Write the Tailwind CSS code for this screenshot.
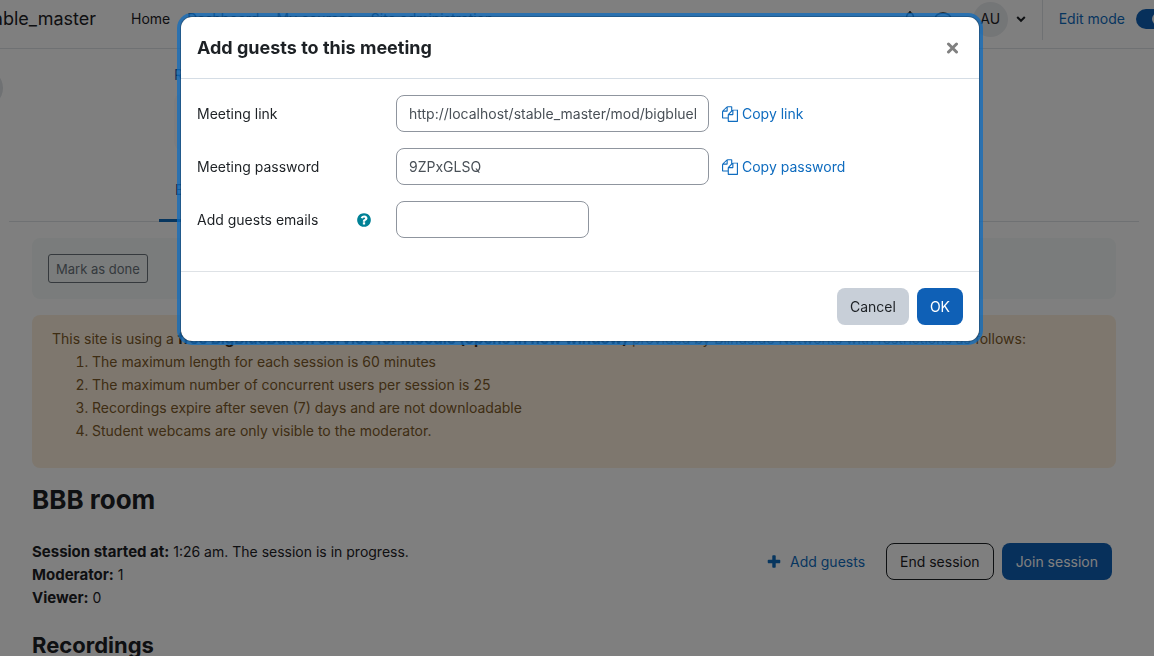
<!DOCTYPE html>
<html lang="en">
<head>
  <meta charset="UTF-8">
  <meta name="viewport" content="width=device-width, initial-scale=1.0">
  <title>BBB room</title>
  <script src="https://cdn.jsdelivr.net/npm/@tailwindcss/browser@4"></script>
</head>
<body class="overflow-hidden bg-white font-['Inter',sans-serif] text-[14px] leading-[22px] text-[#1d2125]">

  <!-- Navbar -->
  <header class="flex h-[49px] items-start justify-between overflow-hidden border-b border-[#dee2e6] whitespace-nowrap">
    <div class="flex h-[38px] items-center">
      <a href="#" class="flex w-24 justify-end overflow-hidden text-lg">stable_master</a>
      <nav class="ml-[35px] flex gap-[17px]">
        <a href="#">Home</a>
        <a href="#">Dashboard</a>
        <a href="#">My courses</a>
        <a href="#">Site administration</a>
      </nav>
    </div>
    <div class="flex h-[38px] items-center">
      <button type="button" aria-label="Notifications" class="mr-4">
        <svg class="size-4" viewBox="0 0 16 16" fill="none" stroke="currentColor" stroke-width="1.5"><path d="M8 0v2M3.500 12c1-1.500 1-3 1-5 0-3 1.500-5 3.500-5s3.500 2 3.500 5c0 2 0 3.500 1 5zM6.500 14h3"/></svg>
      </button>
      <button type="button" aria-label="Messages" class="mr-[21px]">
        <svg class="size-[18px]" viewBox="0 0 18 18" fill="none" stroke="currentColor" stroke-width="1.5"><path d="M9 3c4.500 0 8 2.500 8 6s-3.500 6-8 6c-1 0-2 0-3-.5L2.500 16l1-3C2 12 1 10.500 1 9c0-3.500 3.500-6 8-6z"/></svg>
      </button>
      <button type="button" class="flex items-center gap-2">
        <span class="flex size-[35px] items-center justify-center rounded-full bg-[#e9ecef]">AU</span>
        <svg class="h-2 w-[10px]" viewBox="0 0 10 8" fill="none" stroke="currentColor" stroke-width="2"><path d="M1.200 2L5 5.800 8.800 2"/></svg>
      </button>
      <label for="edit-mode" class="ml-4 flex h-[42px] items-center border-l border-[#dee2e6] pl-4 text-[#0f6cbf]">Edit mode</label>
      <span class="relative -mr-[18px] ml-[11px] flex">
        <input id="edit-mode" type="checkbox" checked class="h-5 w-9 appearance-none rounded-full bg-[#0f60b6]">
        <span class="pointer-events-none absolute top-1 left-4 size-3 rounded-full bg-white"></span>
      </span>
    </div>
  </header>

  <!-- Activity header and tabs -->
  <div class="relative mr-[15px] ml-[9px] border-b border-[#dee2e6]">
    <button type="button" aria-label="Open course index" class="absolute top-[20px] -left-[44px] size-[38px] rounded-full bg-[#dee2e6]"></button>
    <div class="px-[165px] pt-[15px]">
      <a href="#" class="text-[#0f6cbf]">Room</a>
      <div class="mt-2 size-[56px] rounded-lg bg-[#f8f9fa]"></div>
    </div>
    <div class="mt-6 flex px-[150px]">
      <a href="#" class="-mb-px border-b-3 border-[#0f6cbf] px-4 pt-[5px] pb-[18px] text-[#0b5190]">BigBlueButton</a>
    </div>
  </div>

  <main class="mr-[38px] ml-8">
    <div class="mt-4 rounded-lg bg-[#f5f9f8] p-4">
      <button type="button" class="h-[29px] rounded-[3px] border border-[#6a737b] px-[7px] text-[13px] leading-5 text-[#6a737b]">Mark as done</button>
    </div>

    <div class="mt-4 rounded-lg bg-[#fcefdc] px-5 pt-[13px] pb-[26px] text-[#7d5a29]">
      <p class="whitespace-nowrap">This site is using a <a href="#" class="text-[15px] font-bold text-[#3e2d14]">free BigBlueButton service for Moodle (opens in new window)</a> provided by Blindside Networks with restrictions as follows:</p>
      <ol class="list-decimal pl-10 leading-[23px]">
        <li>The maximum length for each session is 60 minutes</li>
        <li>The maximum number of concurrent users per session is 25</li>
        <li>Recordings expire after seven (7) days and are not downloadable</li>
        <li>Student webcams are only visible to the moderator.</li>
      </ol>
    </div>

    <h2 class="mt-4 text-[26px] leading-8 font-bold">BBB room</h2>

    <div class="mt-6 flex items-start justify-between">
      <div class="leading-[23px]">
        <p><strong class="text-[15px]">Session started at:</strong> 1:26 am. The session is in progress.</p>
        <p><strong class="text-[15px]">Moderator:</strong> 1</p>
        <p><strong class="text-[15px]">Viewer:</strong> 0</p>
      </div>
      <div class="mt-[3px] mr-1 flex items-center gap-2">
        <button type="button" class="flex h-[37px] items-center gap-2 px-[13px] text-[#0f6cbf]">
          <svg class="size-4" viewBox="0 0 1792 1792" fill="currentColor"><path d="M1600 736v192q0 40-28 68t-68 28h-416v416q0 40-28 68t-68 28H800q-40 0-68-28t-28-68v-416H288q-40 0-68-28t-28-68V736q0-40 28-68t68-28h416V224q0-40 28-68t68-28h192q40 0 68 28t28 68v416h416q40 0 68 28t28 68z"/></svg>
          Add guests
        </button>
        <button type="button" class="h-[37px] rounded-lg border border-[#1d2125] px-[13px]">End session</button>
        <button type="button" class="h-[37px] rounded-lg bg-[#0f60b6] px-[14px] text-white">Join session</button>
      </div>
    </div>

    <h3 class="mt-[22px] text-[22px] leading-7 font-bold">Recordings</h3>
  </main>

  <!-- Modal -->
  <div class="fixed inset-0 bg-black/50"></div>
  <div class="fixed inset-0 flex items-start justify-center pt-4 pl-[6px]">
    <div role="dialog" aria-labelledby="modal-title" class="w-full max-w-[800px] rounded-xl border border-black/20 bg-white bg-clip-padding ring-3 ring-[#0f6cbf]/75">
      <div class="flex h-[62px] items-center justify-between border-b border-[#d5dde5] px-4">
        <h5 id="modal-title" class="text-lg font-bold">Add guests to this meeting</h5>
        <button type="button" aria-label="Close" class="mr-1 text-[#808080]">
          <svg class="size-[13px]" viewBox="0 0 13 13" fill="none" stroke="currentColor" stroke-width="3" stroke-linecap="round"><path d="M2.500 3l8 8M10.500 3l-8 8"/></svg>
        </button>
      </div>

      <form class="flex flex-col gap-4 px-4 pt-4 pb-[33px]">
        <div class="flex items-center">
          <label for="meeting-link" class="w-[199px]">Meeting link</label>
          <input id="meeting-link" type="text" readonly value="http://localhost/stable_master/mod/bigbluebuttonbn/guest.php" class="h-[37px] w-[313px] rounded-lg border border-[#8f959e] px-3 text-[#495057]">
          <a href="#" class="ml-[13px] flex items-center gap-1 text-[#0f6cbf]">
            <svg class="size-4" viewBox="0 0 1792 1792" fill="currentColor"><path d="M1696 384q40 0 68 28t28 68v1216q0 40-28 68t-68 28H736q-40 0-68-28t-28-68v-288H96q-40 0-68-28t-28-68V672q0-40 20-88t48-76l408-408q28-28 76-48t88-20h416q40 0 68 28t28 68v328q68-40 128-40h416zm-544 213L853 896h299V597zM512 213L213 512h299V213zm196 647l316-316V128H640v416q0 40-28 68t-68 28H128v640h512v-256q0-40 20-88t48-76zm956 804V512h-384v416q0 40-28 68t-68 28H768v640h896z"/></svg>
            Copy link
          </a>
        </div>
        <div class="flex items-center">
          <label for="meeting-password" class="w-[199px]">Meeting password</label>
          <input id="meeting-password" type="text" readonly value="9ZPxGLSQ" class="h-[37px] w-[313px] rounded-lg border border-[#8f959e] px-3 text-[#495057]">
          <a href="#" class="ml-[13px] flex items-center gap-1 text-[#0f6cbf]">
            <svg class="size-4" viewBox="0 0 1792 1792" fill="currentColor"><path d="M1696 384q40 0 68 28t28 68v1216q0 40-28 68t-68 28H736q-40 0-68-28t-28-68v-288H96q-40 0-68-28t-28-68V672q0-40 20-88t48-76l408-408q28-28 76-48t88-20h416q40 0 68 28t28 68v328q68-40 128-40h416zm-544 213L853 896h299V597zM512 213L213 512h299V213zm196 647l316-316V128H640v416q0 40-28 68t-68 28H128v640h512v-256q0-40 20-88t48-76zm956 804V512h-384v416q0 40-28 68t-68 28H768v640h896z"/></svg>
            Copy password
          </a>
        </div>
        <div class="flex items-center">
          <div class="flex w-[199px] items-center justify-between pr-6">
            <label for="guest-emails">Add guests emails</label>
            <button type="button" aria-label="Help" class="text-[#008196]">
              <svg class="size-4" viewBox="0 0 1792 1792" fill="currentColor"><path d="M1024 1376v-192q0-14-9-23t-23-9H800q-14 0-23 9t-9 23v192q0 14 9 23t23 9h192q14 0 23-9t9-23zm256-672q0-88-55.500-163T1086 425t-170-41q-243 0-371 213-15 24 8 42l132 100q7 6 19 6 16 0 25-12 53-68 86-92 34-24 86-24 48 0 85.500 26t37.500 59q0 38-20 61t-68 45q-63 28-115.500 86.500T768 1020v36q0 14 9 23t23 9h192q14 0 23-9t9-23q0-19 21.500-49.500T1100 957q32-18 49-28.500t46-35 44.500-48 28-60.500 12.500-81zm384 192q0 209-103 385.500T1281.500 1561 896 1664t-385.500-103T231 1281.500 128 896t103-385.500T510.500 231 896 128t385.500 103T1561 510.500 1664 896z"/></svg>
            </button>
          </div>
          <input id="guest-emails" type="text" class="h-[37px] w-[193px] rounded-lg border border-[#8f959e] px-3 text-[#495057]">
        </div>
      </form>

      <div class="flex justify-end gap-2 border-t border-[#dee2e6] p-4">
        <button type="button" class="h-[37px] rounded-lg bg-[#c8cfd8] px-[13px]">Cancel</button>
        <button type="button" class="h-[37px] rounded-lg bg-[#0f60b6] px-[13px] text-white">OK</button>
      </div>
    </div>
  </div>

</body>
</html>
